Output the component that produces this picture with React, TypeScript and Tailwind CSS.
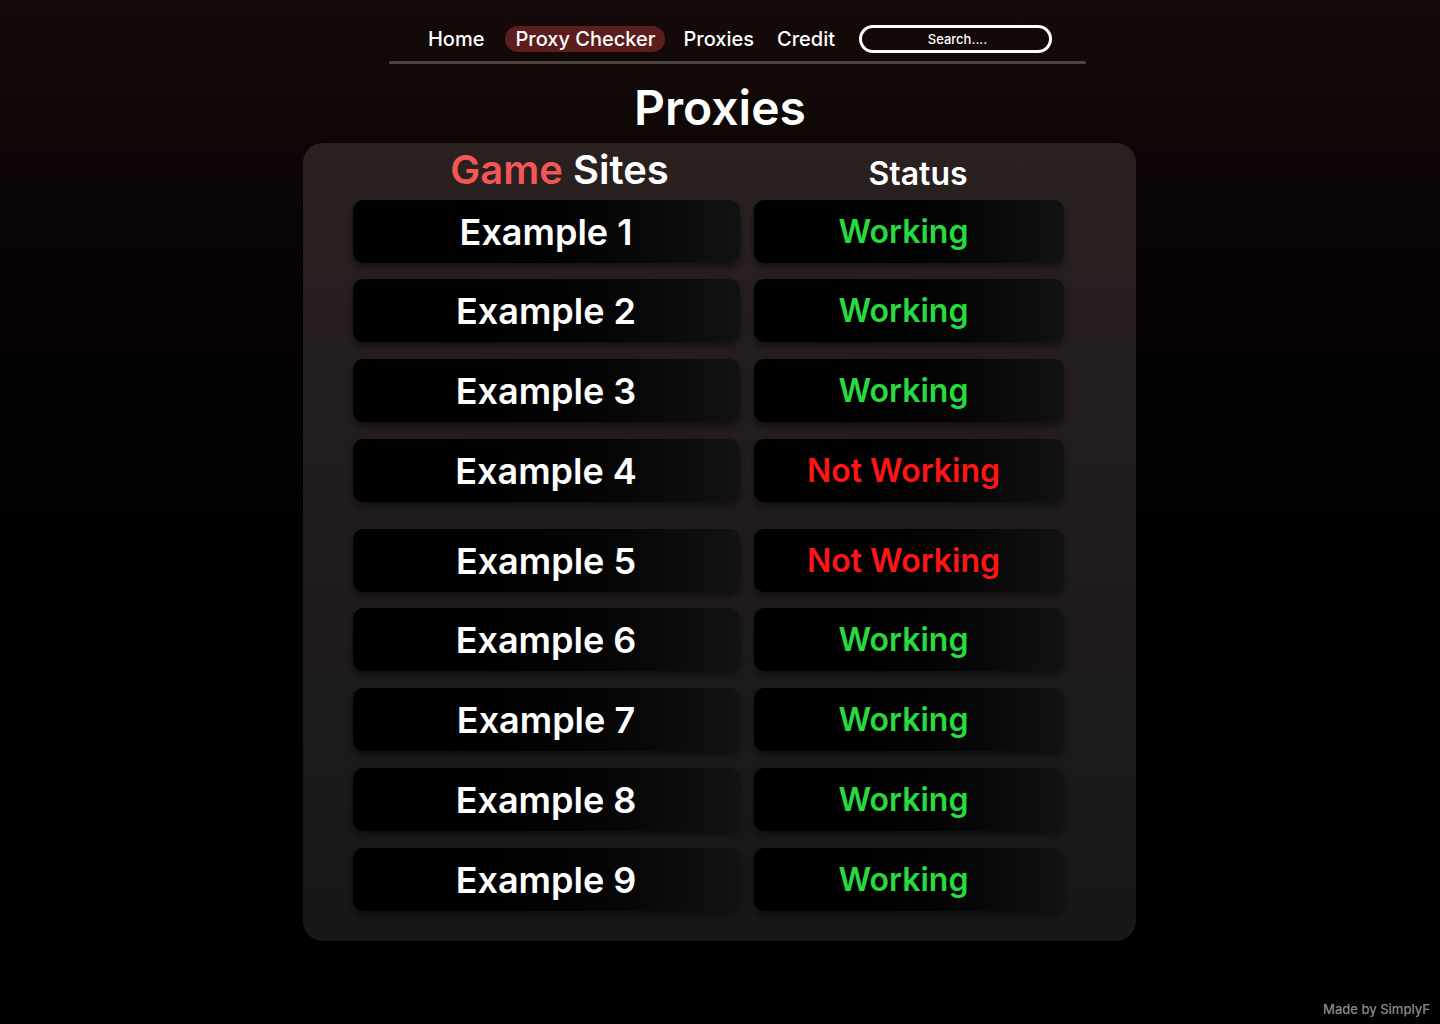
const rows: { name: string; working: boolean; gap: string }[] = [
  { name: "Example 1", working: true, gap: "" },
  { name: "Example 2", working: true, gap: "mt-[16px]" },
  { name: "Example 3", working: true, gap: "mt-[17px]" },
  { name: "Example 4", working: false, gap: "mt-[17px]" },
  { name: "Example 5", working: false, gap: "mt-[27px]" },
  { name: "Example 6", working: true, gap: "mt-[16px]" },
  { name: "Example 7", working: true, gap: "mt-[17px]" },
  { name: "Example 8", working: true, gap: "mt-[17px]" },
  { name: "Example 9", working: true, gap: "mt-[17px]" },
];

function NavBar() {
  return (
    <div className="mx-auto w-[697px] pt-[25px] translate-x-[17px]">
      <div className="flex items-center justify-center pl-[6px] text-[20px] font-medium text-white">
        <a className="leading-none">Home</a>
        <a className="ml-[21px] flex h-[26px] items-center rounded-full bg-[#5c1d1d] px-[10px] leading-none">
          Proxy Checker
        </a>
        <a className="ml-[18px] leading-none">Proxies</a>
        <a className="ml-[23px] leading-none">Credit</a>
        <input
          className="ml-[24px] h-[28px] w-[193px] rounded-full border-[3px] border-white bg-transparent pl-[4px] text-center text-[13px] font-medium text-white outline-none placeholder:text-white"
          placeholder="Search...."
        />
      </div>
      <div className="mt-[8px] h-[3px] rounded-full bg-[#4a4343]" />
    </div>
  );
}

function Row({ name, working, gap }: { name: string; working: boolean; gap: string }) {
  const box =
    "flex h-[63px] items-center justify-center rounded-[10px] bg-linear-to-r from-black to-[#121212] shadow-[0_4px_6px_rgba(0,0,0,0.45)]";
  return (
    <div className={`flex gap-[14px] ${gap}`}>
      <div className={`${box} w-[387px] text-[36px] font-semibold text-white`}>{name}</div>
      <div
        className={`${box} w-[310px] pr-[10px] text-[32px] font-semibold ${
          working ? "text-[#27db3f]" : "text-[#ff1515]"
        }`}
      >
        {working ? "Working" : "Not Working"}
      </div>
    </div>
  );
}

export default function App() {
  return (
    <div
      className="flex min-h-[1024px] flex-col bg-linear-to-b from-[#150a0a] to-black to-90% text-white"
      style={{ fontFamily: "Inter, 'Noto Sans', sans-serif" }}
    >
      <NavBar />

      <h1 className="mt-[20px] text-center text-[48px] font-semibold leading-none">Proxies</h1>

      <div className="mx-auto mt-[11px] w-[833px] -translate-x-[1px] rounded-[20px] bg-linear-to-b from-[#2a2020] to-[#171717] pb-[30px] pl-[50px] pt-[7px]">
        {/* header */}
        <div className="mb-[10px] flex items-end">
          <div className="w-[414px] text-center text-[40px] font-semibold leading-none">
            <span className="text-[#f35656]">Game</span> Sites
          </div>
          <div className="w-[303px] text-center text-[32px] font-semibold leading-none">Status</div>
        </div>

        {rows.map((r) => (
          <Row key={r.name} name={r.name} working={r.working} gap={r.gap} />
        ))}
      </div>

      <div className="mt-auto pb-[5px] pr-[10px] text-right text-[13px] font-medium text-[#8b8b8b]">
        Made by SimplyF
      </div>
    </div>
  );
}
